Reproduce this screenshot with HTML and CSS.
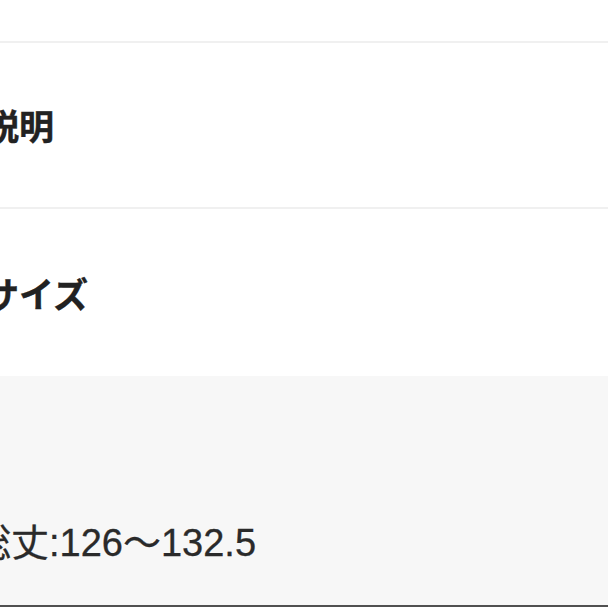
FILE: index.html
```html
<!DOCTYPE html>
<html lang="ja">
<head>
<meta charset="utf-8">
<link rel="stylesheet" href="styles.css">
</head>
<body>
<div class="page">
  <div class="top"></div>
  <div class="divider"></div>
  <div class="section"><h2 class="heading heading-desc">説明</h2></div>
  <div class="divider"></div>
  <div class="section section-size"><h2 class="heading heading-size">サイズ</h2></div>
  <div class="detail"><p class="detail-text">総丈:126～132.5</p></div>
  <div class="bottom-line"></div>
</div>
</body>
</html>
```
FILE: styles.css
```css
html, body {
  margin: 0;
  padding: 0;
  background: #ffffff;
}
.page {
  width: 608px;
  height: 608px;
  overflow: hidden;
  display: flex;
  flex-direction: column;
  font-family: "Noto Sans CJK JP", "Noto Sans", sans-serif;
  color: #222222;
}
.top {
  height: 41px;
  flex: none;
}
.divider {
  height: 2px;
  background: #f0f0f0;
  flex: none;
}
.section {
  height: 164px;
  flex: none;
  display: flex;
  align-items: center;
}
.section-size {
  height: 167px;
}
.heading {
  margin: 0 0 0 -16px;
  font-size: 35px;
  font-weight: 700;
  line-height: 40px;
  white-space: nowrap;
  -webkit-text-stroke: 0.4px #222222;
}
.detail {
  height: 229px;
  flex: none;
  background: #f7f7f7;
  display: flex;
  align-items: flex-end;
}
.detail-text {
  margin: 0 0 40px -27px;
  font-family: "Liberation Sans", "Noto Sans CJK JP", sans-serif;
  font-size: 38px;
  line-height: 44px;
  color: #2a2a2a;
  white-space: nowrap;
  -webkit-text-stroke: 0.3px #2a2a2a;
}
.bottom-line {
  height: 2px;
  background: #505050;
  flex: none;
}
```
